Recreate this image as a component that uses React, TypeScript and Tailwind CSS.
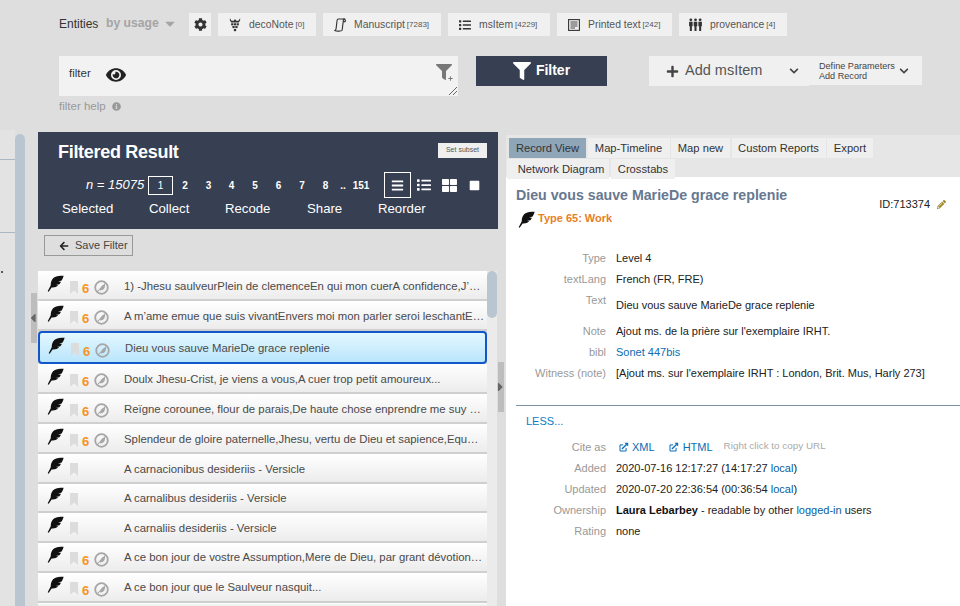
import React from "react";
import { FaCog, FaPlus, FaEye, FaInfoCircle, FaFilter, FaChevronDown, FaArrowLeft, FaPencilAlt, FaList, FaBars, FaThLarge, FaSquare, FaCaretDown, FaCaretLeft, FaCaretRight } from "react-icons/fa";

const Feather = ({ className = "" }: { className?: string }) => (
  <svg viewBox="0 0 20 20" className={className} fill="currentColor">
    <path d="M19.5 1 C14 .3 9.6 1.4 7.2 3.8 C4.8 6.2 4.4 9.5 4.4 12.2 L2.2 16.4 L.8 19 L2 19.6 L5.4 14.6 C8 15 11 14.4 13.2 12.2 L10.4 11.8 L14.6 10.8 C15.4 9.9 16 9 16.4 8 L13 8 L17.2 6.4 C18.4 4.6 19.2 3 19.5 1 Z" />
  </svg>
);

const Bookmark = () => (
  <svg viewBox="0 0 8 13" className="w-[8px] h-[13px] text-[#dcdcdc] shrink-0 ml-[6px] mt-[4px]" fill="currentColor">
    <path d="M0 0 H8 V13 L4 9.5 L0 13 Z" />
  </svg>
);

const NoteIcon = () => (
  <svg viewBox="0 0 20 20" className="w-[15px] h-[15px] text-[#a6a6a6]">
    <circle cx="10" cy="10" r="8.4" fill="none" stroke="currentColor" strokeWidth="2.4" />
    <path d="M4 16 L15.5 4.5" stroke="currentColor" strokeWidth="1.4" />
    <path d="M14.5 6 C15.5 10 12.5 14 8 14 C8 10 10 7 14.5 6 Z" fill="currentColor" />
  </svg>
);

const Grapes = () => (
  <svg viewBox="0 0 14 16" className="w-[12px] h-[14px]" fill="currentColor">
    <path d="M1 0 L3 3 L5.5 3 L7 1 L8.5 3 L11 3 L13 0 L13 2.5 L11.5 5 L2.5 5 L1 2.5 Z" />
    <rect x="2.5" y="6" width="2.6" height="2.4" /><rect x="5.7" y="6" width="2.6" height="2.4" /><rect x="8.9" y="6" width="2.6" height="2.4" />
    <rect x="4" y="9.2" width="2.6" height="2.4" /><rect x="7.4" y="9.2" width="2.6" height="2.4" />
    <rect x="5.7" y="12.6" width="2.6" height="2.6" />
  </svg>
);

const ScrollIcon = () => (
  <svg viewBox="0 0 14 16" className="w-[12px] h-[14px]" fill="none" stroke="currentColor" strokeWidth="1.3">
    <path d="M1 14.5 C2.5 15.5 9 15.5 9.5 14 L11 2 C11.2 1 12 .8 13 1 L5 1 C4 1 3.7 1.6 3.6 2.4 L2.4 12.5 C2.2 13.5 1.6 14 1 14.5 Z" />
    <path d="M11 1.2 C13 1 13.6 2.5 13 4 L11 4" />
  </svg>
);

const PageIcon = () => (
  <svg viewBox="0 0 12 12" className="w-[12px] h-[12px]" fill="none" stroke="currentColor">
    <rect x="0.6" y="0.6" width="10.8" height="10.8" strokeWidth="1.1" />
    <path d="M2.5 3 H9.5 M2.5 5 H9.5 M2.5 7 H9.5 M2.5 9 H7" strokeWidth="0.9" />
  </svg>
);

const People = () => (
  <svg viewBox="0 0 14 14" className="w-[13px] h-[13px]" fill="currentColor">
    {[2, 7, 12].map((x) => (
      <g key={x}>
        <circle cx={x} cy="2" r="1.5" />
        <path d={`M${x - 1.9} 4 H${x + 1.9} V9 H${x + 1.1} V14 H${x - 1.1} V9 H${x - 1.9} Z`} />
      </g>
    ))}
  </svg>
);

const LinkIcon = () => (
  <svg viewBox="0 0 12 12" className="w-[10px] h-[10px]" fill="none" stroke="currentColor" strokeWidth="1.2">
    <path d="M8.5 7 V10.8 H1.2 V3.5 H5" />
    <path d="M3.5 8.5 L9 3" strokeWidth="1.6" />
    <path d="M6.5 1 H11 V5.5 Z" fill="currentColor" stroke="none" />
  </svg>
);

const Chip = ({ icon, name, count, w }: { icon: React.ReactNode; name: string; count: string; w: string }) => (
  <div className={`${w} h-[23px] bg-[#f0f0f0] flex items-center`}>
    <span className="w-[23px] flex justify-end shrink-0 text-[#333]">{icon}</span>
    <span className="ml-[8px] text-[10.4px] text-[#555] whitespace-nowrap">{name}</span>
    <span className="ml-[2px] text-[8px] text-[#555] whitespace-nowrap">[{count}]</span>
  </div>
);

const rows: [string, boolean, boolean][] = [
  ["1) -Jhesu saulveurPlein de clemenceEn qui mon cuerA confidence,J’…", true, false],
  ["A m’ame emue que suis vivantEnvers moi mon parler seroi leschantE…", true, false],
  ["Dieu vous sauve MarieDe grace replenie", true, true],
  ["Doulx Jhesu-Crist, je viens a vous,A cuer trop petit amoureux...", true, false],
  ["Reïgne corounee, flour de parais,De haute chose enprendre me suy …", true, false],
  ["Splendeur de gloire paternelle,Jhesu, vertu de Dieu et sapience,Equ…", true, false],
  ["A carnacionibus desideriis - Versicle", false, false],
  ["A carnalibus desideriis - Versicle", false, false],
  ["A carnaliis desideriis - Versicle", false, false],
  ["A ce bon jour de vostre Assumption,Mere de Dieu, par grant dévotion…", true, false],
  ["A ce bon jour que le Saulveur nasquit...", true, false],
];

const Row = ({ text, six, sel }: { text: string; six: boolean; sel: boolean }) => (
  <div
    className={
      sel
        ? "h-[33px] shrink-0 flex items-center border-2 border-[#1257c9] rounded-[4px] bg-gradient-to-b from-[#e4f8ff] to-[#b9e5fc] pl-[7px]"
        : `${six ? "h-[30px]" : "h-[29.5px]"} shrink-0 flex items-center border-b-2 border-[#cfcfcf] bg-gradient-to-b from-[#ffffff] to-[#ececec] pl-[8px]`
    }
  >
    <Feather className="w-[17px] h-[17px] text-[#111] shrink-0 -mt-[4px] ml-[1px]" />
    <Bookmark />
    <span className="w-[12px] shrink-0 ml-[4px] mt-[7px] text-[13px] font-bold text-[#f7931e] leading-none">{six ? "6" : ""}</span>
    <span className="w-[15px] shrink-0 mt-[5px]">{six && <NoteIcon />}</span>
    <span className="ml-[15px] text-[11.35px] text-[#4a4a4a] whitespace-nowrap mt-[3px]">{text}</span>
  </div>
);

const Detail = ({ label, children, h = "h-[21px]" }: { label: string; children: React.ReactNode; h?: string }) => (
  <div className={`grid grid-cols-[90px_1fr] gap-x-[10px] ${h} items-center`}>
    <span className="text-right text-[#999]">{label}</span>
    <span className="text-[#222] whitespace-nowrap">{children}</span>
  </div>
);

const Tab = ({ children, w, active = false, extra = "" }: { children: React.ReactNode; w: string; active?: boolean; extra?: string }) => (
  <span className={`${w} ${extra} h-[20px] flex items-center justify-center text-[11.2px] text-[#333] whitespace-nowrap ${active ? "bg-[#8fa5b8]" : "bg-[#efefef]"}`}>{children}</span>
);

export default function App() {
  return (
    <div className="w-[960px] h-[606px] overflow-hidden bg-[#dedede] flex flex-col" style={{ fontFamily: '"Liberation Sans", Arial, sans-serif' }}>
      {/* Header */}
      <div className="h-[130px] shrink-0 pl-[59px] pt-[13px]">
        <div className="flex items-center h-[23px]">
          <span className="w-[37px] text-[12px] text-[#333] -mt-[2px] whitespace-nowrap">Entities</span>
          <span className="ml-[10px] w-[53px] text-[12.2px] font-bold text-[#a5a5a5] -mt-[2px] whitespace-nowrap">by usage</span>
          <FaCaretDown className="ml-[5px] w-[12px] h-[15px] text-[#a5a5a5] -mt-[3px]" />
          <div className="ml-[13px] w-[22px] h-[23px] bg-[#f0f0f0] flex items-center justify-center"><FaCog className="w-[13px] h-[13px] text-[#333]" /></div>
          <div className="ml-[7px] flex gap-[7px]">
            <Chip w="w-[98px]" icon={<Grapes />} name="decoNote" count="0" />
            <Chip w="w-[118px]" icon={<ScrollIcon />} name="Manuscript" count="7283" />
            <Chip w="w-[102px]" icon={<FaList className="w-[12px] h-[12px]" />} name="msItem" count="4229" />
            <Chip w="w-[115px]" icon={<PageIcon />} name="Printed text" count="242" />
            <Chip w="w-[108px]" icon={<People />} name="provenance" count="4" />
          </div>
        </div>
        <div className="flex items-start mt-[20px]">
          <div className="w-[399px] h-[40px] bg-[#f3f2f3] relative flex items-start pl-[10px] pt-[9px]">
            <span className="text-[11.5px] text-[#333]">filter</span>
            <FaEye className="ml-[15px] w-[20px] h-[20px] text-[#222]" />
            <FaFilter className="absolute right-[6px] top-[8px] w-[16px] h-[16px] text-[#777]" />
            <FaPlus className="absolute right-[5px] top-[20px] w-[5px] h-[5px] text-[#777]" />
            <svg viewBox="0 0 8 8" className="absolute right-[1px] bottom-[1px] w-[8px] h-[8px]"><path d="M0 8 L8 0 M4 8 L8 4" stroke="#444" strokeWidth="0.8" /></svg>
          </div>
          <div className="ml-[18px] w-[131px] h-[30px] bg-[#373f52] flex items-center justify-center gap-[5px] text-white">
            <FaFilter className="w-[18px] h-[18px]" />
            <span className="text-[14px] font-bold -mt-[2px]">Filter</span>
          </div>
          <div className="ml-[42px] w-[160px] h-[30px] bg-[#f0f0f0] flex items-center pl-[17px]">
            <FaPlus className="w-[13px] h-[13px] text-[#444]" />
            <span className="ml-[6px] text-[14.5px] text-[#555]">Add msItem</span>
            <FaChevronDown className="ml-[27px] w-[10px] h-[10px] text-[#444]" />
          </div>
          <div className="w-[113px] h-[29px] bg-[#f0f0f0] flex items-center pl-[10px]">
            <span className="w-[74px] text-[9.1px] leading-[10px] text-[#444] whitespace-nowrap">Define Parameters<br />Add Record</span>
            <FaChevronDown className="ml-[6px] w-[10px] h-[10px] text-[#444]" />
          </div>
        </div>
        <div className="mt-[2px] flex items-center text-[11.5px] text-[#999]">filter help<FaInfoCircle className="ml-[6px] w-[9px] h-[9px]" /></div>
      </div>

      {/* Body */}
      <div className="flex flex-1 min-h-0">
        <div className="w-[15px] bg-[#e3e3e3] flex flex-col relative">
          <div className="mt-[29px] border-t border-[#a9b8c4]" />
          <div className="mt-[72px] border-t border-[#a9b8c4]" />
          <span className="absolute left-[1px] top-[141px] w-[2px] h-[2px] bg-[#555]" />
        </div>
        <div className="w-[10px] mt-[4px] bg-[#b9c6d1] rounded-t-[5px]" />
        <div className="w-[13px] relative">
          <div className="absolute left-[6px] top-[163px] w-[6px] h-[50px] bg-[#bdbdbd] flex items-center">
            <FaCaretLeft className="w-[8px] h-[14px] text-[#666] -ml-[2px]" />
          </div>
        </div>
        {/* Left panel */}
        <div className="w-[460px] mt-[2px] flex flex-col min-h-0">
          <div className="h-[97px] shrink-0 bg-[#373f52] text-white flex flex-col">
            <div className="h-[34px] shrink-0 flex items-center justify-between pl-[20px] pr-[11px] pt-[6px]">
              <span className="text-[18px] font-bold -tracking-[0.3px]">Filtered Result</span>
              <span className="w-[49px] h-[15px] bg-[#efefef] text-[#555] text-[7px] flex items-center justify-center -mt-[4px]">Set subset</span>
            </div>
            <div className="h-[26px] mt-[6px] shrink-0 flex items-center pl-[48px]">
              <span className="w-[62px] text-[13px] italic whitespace-nowrap">n = 15075</span>
              <div className="flex items-center text-[10px] font-bold">
                <span className="w-[25px] h-[19px] border border-white flex items-center justify-center font-normal">1</span>
                <span className="w-[24px] text-center">2</span>
                <span className="w-[23px] text-center">3</span>
                <span className="w-[23px] text-center">4</span>
                <span className="w-[24px] text-center">5</span>
                <span className="w-[23px] text-center">6</span>
                <span className="w-[24px] text-center">7</span>
                <span className="w-[23px] text-center">8</span>
                <span className="w-[12px] text-center">..</span>
                <span className="w-[24px] text-center">151</span>
              </div>
              <div className="ml-[11px] w-[27px] h-[26px] border border-white flex items-center justify-center"><FaBars className="w-[13px] h-[13px]" /></div>
              <FaList className="ml-[6px] w-[14px] h-[14px]" />
              <FaThLarge className="ml-[11px] w-[15px] h-[15px]" />
              <FaSquare className="ml-[12px] w-[11px] h-[11px]" />
            </div>
            <div className="flex items-center h-[22px] shrink-0 text-[13.2px]">
              <span className="ml-[24px] w-[87px]">Selected</span>
              <span className="w-[76px]">Collect</span>
              <span className="w-[82px]">Recode</span>
              <span className="w-[71px]">Share</span>
              <span>Reorder</span>
            </div>
          </div>
          <div className="h-[42px] shrink-0 pl-[6px] pt-[6px]">
            <div className="w-[89px] h-[21px] border border-[#999] flex items-center pl-[14px] text-[11px] text-[#444]">
              <FaArrowLeft className="w-[10px] h-[10px] text-[#222]" />
              <span className="ml-[6px]">Save Filter</span>
            </div>
          </div>
          <div className="flex flex-1 min-h-0">
            <div className="w-[449px] flex flex-col overflow-hidden">
              {rows.map((r, i) => <Row key={i} text={r[0]} six={r[1]} sel={r[2]} />)}
              <div className="flex-1 bg-gradient-to-b from-[#ffffff] to-[#ececec]" />
            </div>
            <div className="w-[10px] bg-[#ebebeb]">
              <div className="h-[47px] w-[10px] bg-[#b9c6d1] rounded-[5px]" />
            </div>
          </div>
        </div>
        {/* splitter */}
        <div className="w-[8px] relative">
          <div className="absolute left-0 top-[232px] w-[6px] h-[50px] bg-[#bdbdbd] flex items-center">
            <FaCaretRight className="w-[8px] h-[14px] text-[#666] -ml-[1px]" />
          </div>
        </div>
        {/* Right panel */}
        <div className="flex-1 mt-[5px] bg-white flex flex-col min-h-0">
          <div className="h-[42px] shrink-0 bg-[#e6e6e6] pl-[3px] pt-[3px]">
            <div className="flex gap-[1.5px]">
              <Tab w="w-[77px]" extra="pt-[1px]" active>Record View</Tab><Tab w="w-[82px]" extra="pt-[1px]">Map-Timeline</Tab><Tab w="w-[59px]" extra="pt-[1px]">Map new</Tab><Tab w="w-[94px]" extra="pt-[1px]">Custom Reports</Tab><Tab w="w-[46px]" extra="pt-[1px]">Export</Tab>
            </div>
            <div className="flex gap-[2px] mt-px -ml-[2px]">
              <Tab w="w-[102px]" extra="pl-[6px]">Network Diagram</Tab><Tab w="w-[64px]">Crosstabs</Tab>
            </div>
          </div>
          <div className="pl-[10px] text-[11px]">
            <div className="flex items-start justify-between pr-[14px] pt-[8px]">
              <span className="text-[14.2px] font-bold text-[#67788f]">Dieu vous sauve MarieDe grace replenie</span>
              <span className="mt-[11px] text-[#222] flex items-center">ID:713374<FaPencilAlt className="ml-[7px] w-[9px] h-[9px] text-[#a08a2c]" /></span>
            </div>
            <div className="flex items-center h-[22px] -mt-[5px]">
              <Feather className="w-[17px] h-[17px] ml-[2px] text-[#111] mt-[2px]" />
              <span className="ml-[3px] font-bold text-[#e8801f]">Type 65: Work</span>
            </div>
            <div className="mt-[18px]">
              <Detail label="Type">Level 4</Detail>
              <Detail label="textLang">French (FR, FRE)</Detail>
              <div className="grid grid-cols-[90px_1fr] gap-x-[10px] h-[31px]">
                <span className="text-right text-[#999] pt-[2px]">Text</span>
                <span className="text-[#222] pt-[7px]">Dieu vous sauve MarieDe grace replenie</span>
              </div>
              <Detail label="Note">Ajout ms. de la prière sur l'exemplaire IRHT.</Detail>
              <Detail label="bibl"><span className="text-[#0a6db5]">Sonet 447bis</span></Detail>
              <Detail label="Witness (note)">[Ajout ms. sur l'exemplaire IRHT : London, Brit. Mus, Harly 273]</Detail>
            </div>
            <div className="mt-[21px] border-t border-[#7d93a6]" />
            <div className="ml-[10px] mt-[8px] text-[#0a7cc4] leading-[14px]">LESS...</div>
            <div className="mt-[10px]">
              <Detail label="Cite as" h="h-[20px]">
                <span className="text-[#0a6db5] inline-flex items-center">
                  <span className="ml-[3px]"><LinkIcon /></span><span className="ml-[3px]">XML</span>
                  <span className="ml-[14px]"><LinkIcon /></span><span className="ml-[4px]">HTML</span>
                  <span className="ml-[11px] text-[9.9px] text-[#aaa]">Right click to copy URL</span>
                </span>
              </Detail>
              <Detail label="Added">2020-07-16 12:17:27 (14:17:27 <span className="text-[#0a5d9c]">local</span>)</Detail>
              <Detail label="Updated">2020-07-20 22:36:54 (00:36:54 <span className="text-[#0a5d9c]">local</span>)</Detail>
              <Detail label="Ownership"><b className="text-[#111]">Laura Lebarbey</b> - readable by other <span className="text-[#0a5d9c]">logged-in</span> users</Detail>
              <Detail label="Rating">none</Detail>
            </div>
          </div>
        </div>
      </div>
    </div>
  );
}
